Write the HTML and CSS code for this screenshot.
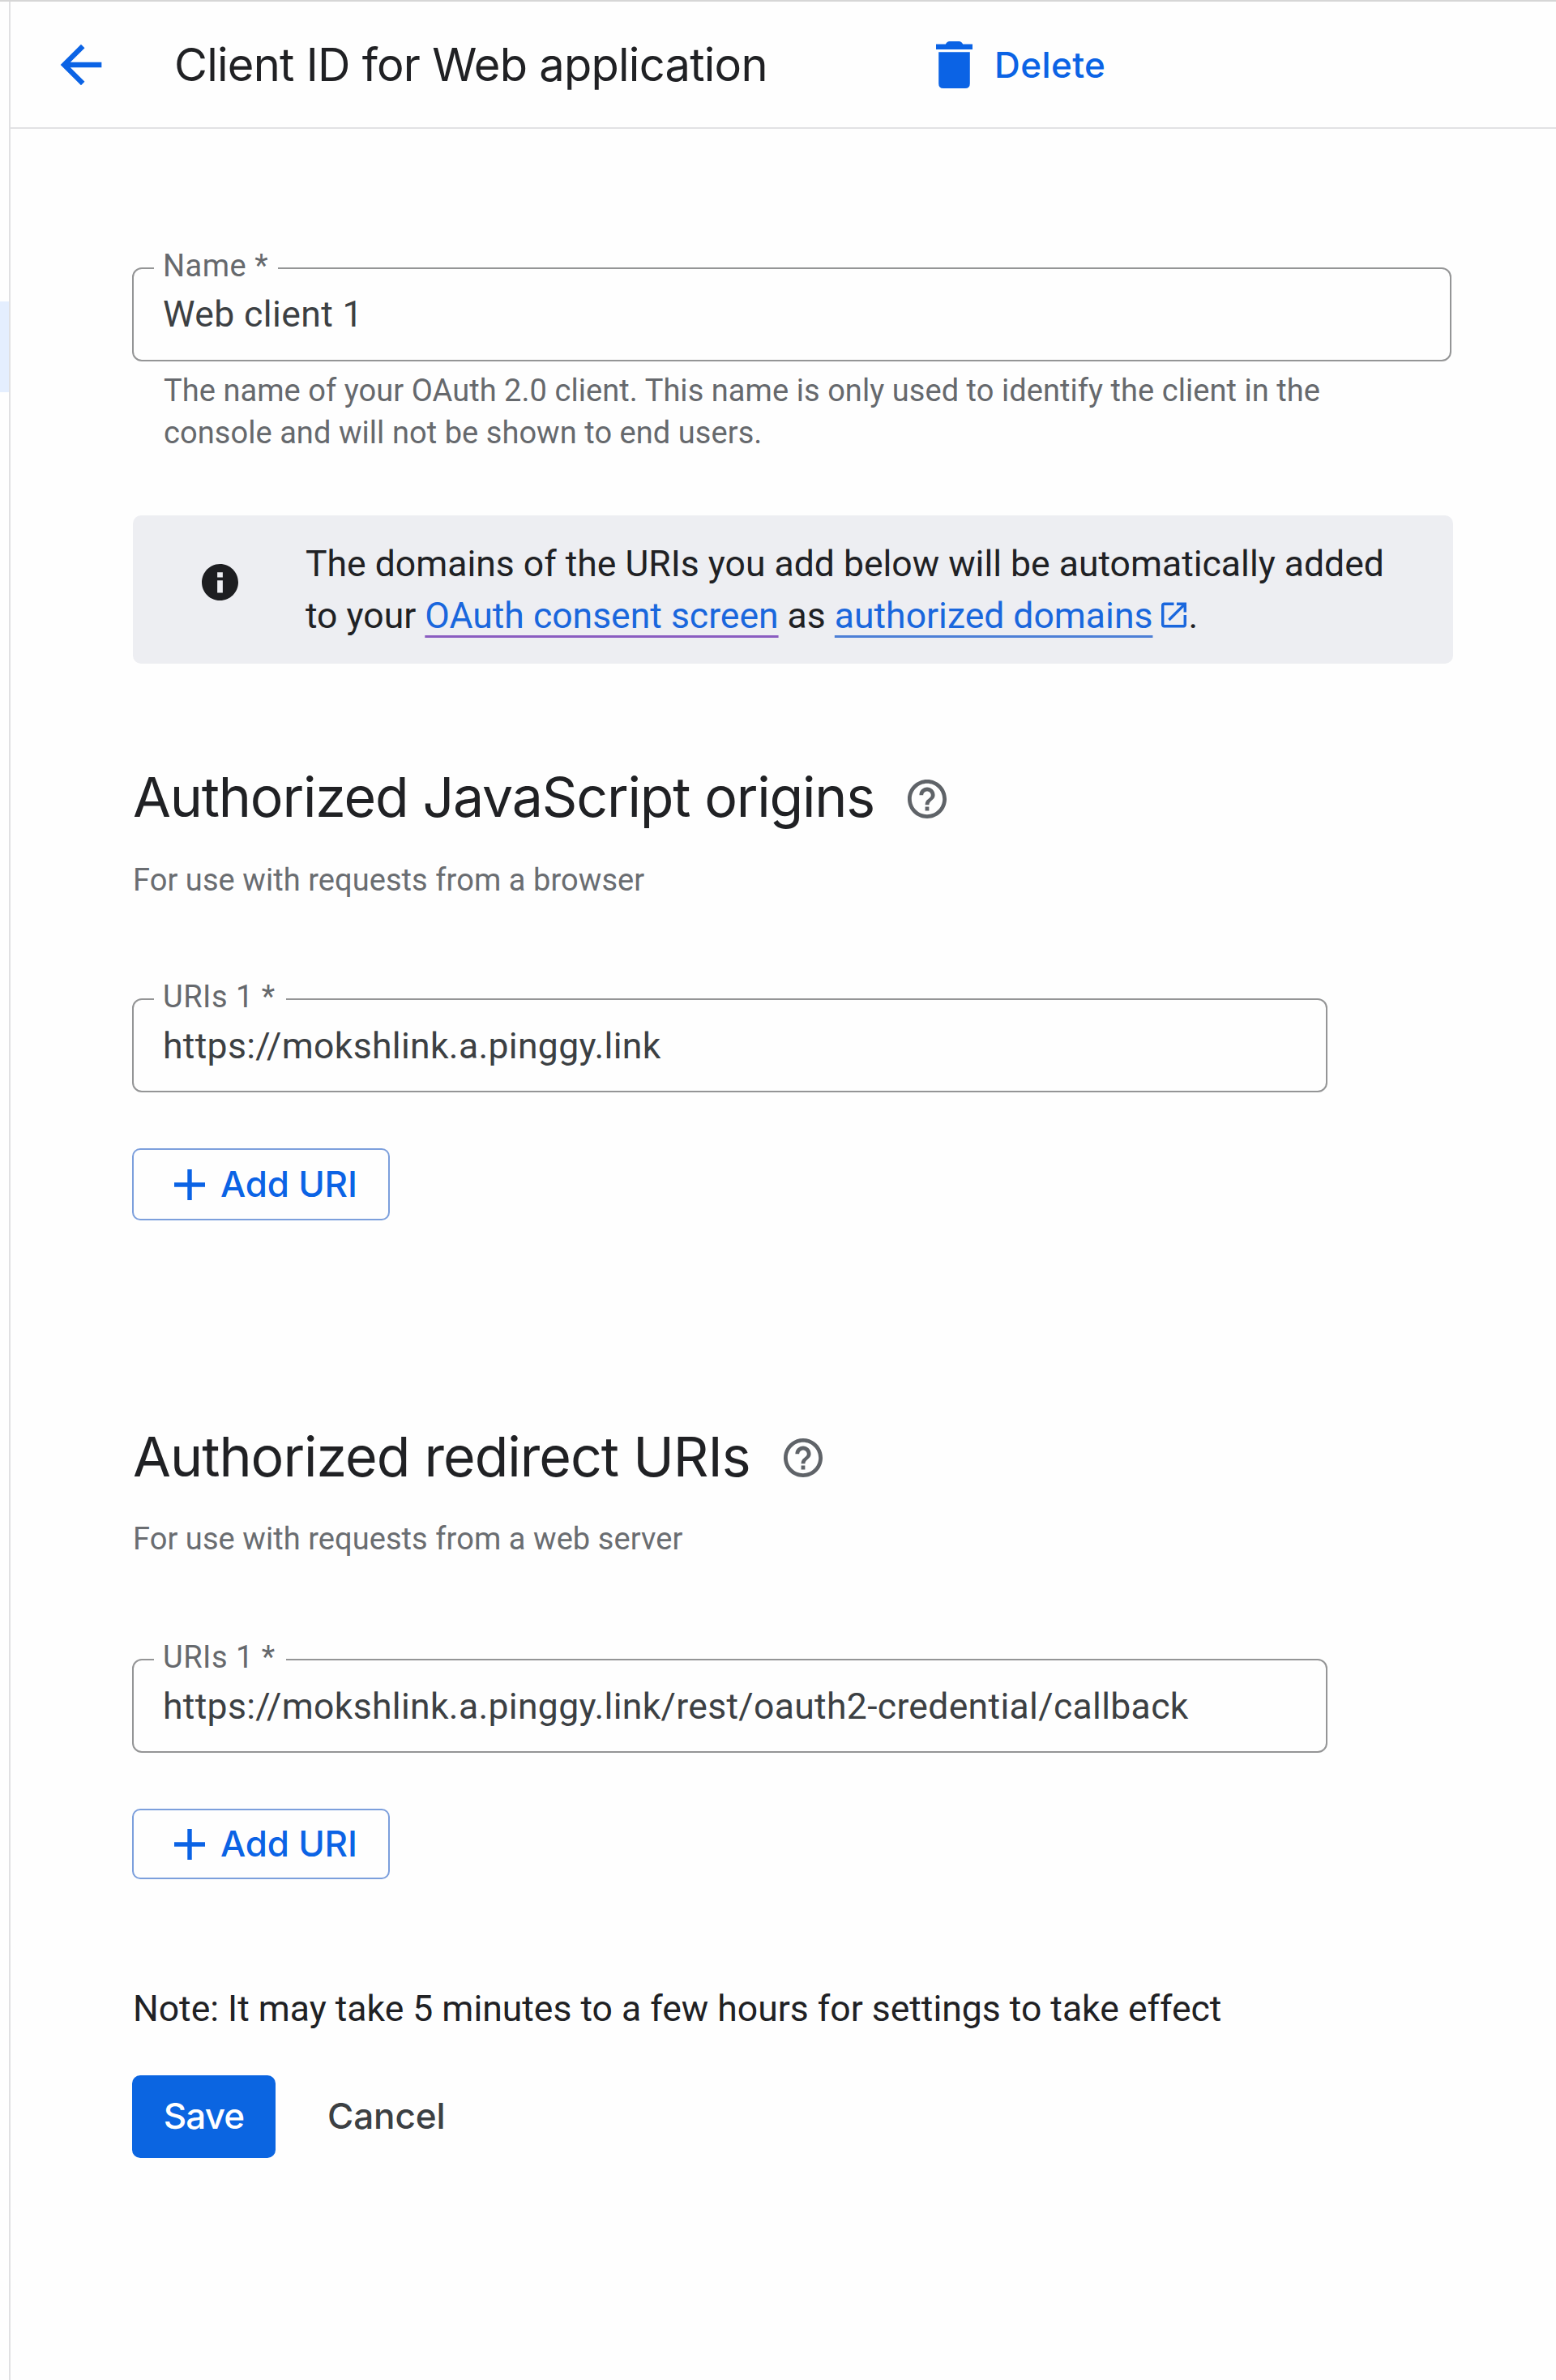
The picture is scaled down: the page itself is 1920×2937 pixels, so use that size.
FILE: index.html
```html
<!DOCTYPE html>
<html lang="en">
<head>
<meta charset="utf-8">
<title>Client ID for Web application</title>
<link rel="stylesheet" href="styles.css">
</head>
<body>
<div class="shell">
  <aside class="rail"><div class="rail-active"></div></aside>
  <div class="page">
    <header class="topbar">
      <svg class="back" viewBox="0 0 24 24" fill="currentColor"><path d="M20 11H7.830l5.590-5.590L12 4l-8 8 8 8 1.410-1.410L7.830 13H20v-2z"/></svg>
      <h1 class="title">Client ID for Web application</h1>
      <a class="delete">
        <svg class="trash" viewBox="5 3 14 18" fill="currentColor"><path d="M6 7.100h12V19.200q0 1.800-1.800 1.800H7.800Q6 21 6 19.200zM5 4.100h3.700Q9.200 3 10.200 3h3.600q1 0 1.500 1.100H19v2H5z"/></svg>
        <span>Delete</span>
      </a>
    </header>
    <main class="content">
      <fieldset class="field field-wide">
        <legend class="label label-name">Name *</legend>
        <div class="value">Web client 1</div>
      </fieldset>
      <p class="hint">The name of your OAuth 2.0 client. This name is only used to identify the client in the<br>console and will not be shown to end users.</p>

      <div class="notice">
        <svg class="info" viewBox="2 2 20 20" fill="currentColor"><path d="M12 2C6.480 2 2 6.480 2 12s4.480 10 10 10 10-4.480 10-10S17.520 2 12 2zm1.500 15.800h-3V11h3v6.800zm0-8.500h-3V6.500h3v2.800z"/></svg>
        <p class="notice-text">The domains of the URIs you add below will be automatically added<br>to your <a class="link visited">OAuth consent screen</a> as <a class="link">authorized domains</a><svg class="external" viewBox="3 3 18 18" fill="currentColor"><path d="M19 19H5V5h7V3H5c-1.110 0-2 .9-2 2v14c0 1.100.89 2 2 2h14c1.100 0 2-.9 2-2v-7h-2v7zM14 3v2h3.590l-9.830 9.830 1.410 1.410L19 6.410V10h2V3h-7z"/></svg>.</p>
      </div>

      <section class="group origins">
        <div class="heading">
          <h2>Authorized JavaScript origins</h2>
          <svg class="help" viewBox="2 2 20 20" fill="currentColor"><path d="M11 18h2v-2h-2v2zm1-16C6.480 2 2 6.480 2 12s4.480 10 10 10 10-4.480 10-10S17.520 2 12 2zm0 18c-4.410 0-8-3.590-8-8s3.590-8 8-8 8 3.590 8 8-3.590 8-8 8zm0-14c-2.210 0-4 1.790-4 4h2c0-1.100.9-2 2-2s2 .9 2 2c0 2-3 1.750-3 5h2c0-2.250 3-2.500 3-5 0-2.210-1.790-4-4-4z"/></svg>
        </div>
        <p class="sub">For use with requests from a browser</p>
        <fieldset class="field">
          <legend class="label label-uri">URIs 1 *</legend>
          <div class="value url">https://mokshlink.a.pinggy.link</div>
        </fieldset>
        <button class="add">
          <svg class="plus" viewBox="5 5 14 14" fill="currentColor"><path d="M19 13h-6v6h-2v-6H5v-2h6V5h2v6h6v2z"/></svg>
          <span>Add URI</span>
        </button>
      </section>

      <section class="group redirects">
        <div class="heading">
          <h2>Authorized redirect URIs</h2>
          <svg class="help" viewBox="2 2 20 20" fill="currentColor"><path d="M11 18h2v-2h-2v2zm1-16C6.480 2 2 6.480 2 12s4.480 10 10 10 10-4.480 10-10S17.520 2 12 2zm0 18c-4.410 0-8-3.590-8-8s3.590-8 8-8 8 3.590 8 8-3.590 8-8 8zm0-14c-2.210 0-4 1.790-4 4h2c0-1.100.9-2 2-2s2 .9 2 2c0 2-3 1.750-3 5h2c0-2.250 3-2.500 3-5 0-2.210-1.790-4-4-4z"/></svg>
        </div>
        <p class="sub">For use with requests from a web server</p>
        <fieldset class="field">
          <legend class="label label-uri">URIs 1 *</legend>
          <div class="value url">https://mokshlink.a.pinggy.link/rest/oauth2-credential/callback</div>
        </fieldset>
        <button class="add">
          <svg class="plus" viewBox="5 5 14 14" fill="currentColor"><path d="M19 13h-6v6h-2v-6H5v-2h6V5h2v6h6v2z"/></svg>
          <span>Add URI</span>
        </button>
      </section>

      <p class="note">Note: It may take 5 minutes to a few hours for settings to take effect</p>
      <div class="actions">
        <button class="save">Save</button>
        <button class="cancel">Cancel</button>
      </div>
    </main>
  </div>
</div>
</body>
</html>
```
FILE: styles.css
```css
* { box-sizing: border-box; }

body {
  margin: 0;
  background: #fefefe;
  color: #202124;
  font-family: Roboto, "Liberation Sans", sans-serif;
}

h1, h2, p { margin: 0; font-weight: 400; }
svg { display: block; flex: none; }
button { font: inherit; padding: 0; border: 0; background: none; }

.shell {
  display: flex;
  height: 2937px;
  border-top: 2px solid #d6d6d6;
}

.rail {
  width: 11px;
  padding-top: 370px;
}
.rail-active { height: 112px; background: #e4eefe; }

.page {
  flex: 1;
  border-left: 2px solid #e0e0e2;
}

/* Top bar */
.topbar {
  display: flex;
  align-items: center;
  height: 157px;
  padding-left: 49px;
  border-bottom: 2px solid #e2e2e4;
}
.back { width: 76px; height: 76px; color: #0b63e5; }
.title {
  width: 924px;
  margin-left: 77px;
  font: 400 56px/70px Inter, sans-serif;
  letter-spacing: -0.74px;
  white-space: nowrap;
}
.delete {
  display: flex;
  align-items: center;
  gap: 27px;
  margin-left: 16px;
  color: #0b63e5;
  font: 500 44px/56px Inter, sans-serif;
  letter-spacing: 0.4px;
}
.trash { width: 45px; height: 58px; }

/* Form */
.content { padding: 147px 0 0 150px; }

.field {
  width: 1475px;
  height: 140px;
  margin: 0;
  padding: 4px 25px 0;
  border: 2px solid #949596;
  border-radius: 12px;
}
.field-wide { width: 1628px; }
.label {
  padding: 0 0 6px 11px;
  color: #66696d;
  font-size: 38px;
  line-height: 44px;
  letter-spacing: 0.5px;
  white-space: nowrap;
}
.label-name { width: 153px; }
.label-uri { width: 163px; }
.value {
  padding-left: 11px;
  color: #3c4043;
  font-size: 44.5px;
  line-height: 56px;
  letter-spacing: 0.4px;
}
.url { padding-top: 1px; letter-spacing: 0.32px; }

.hint {
  margin-top: 10px;
  padding-left: 39px;
  color: #66696d;
  font-size: 38px;
  line-height: 52px;
  letter-spacing: 0.06px;
}

.notice {
  display: flex;
  width: 1629px;
  height: 183px;
  margin: 76px 0 0 1px;
  padding: 28px 0 0 85px;
  border-radius: 10px;
  background: #edeef2;
}
.info { width: 45px; height: 45px; margin-top: 32px; color: #1d1e21; }
.notice-text {
  margin-left: 83px;
  font-size: 44.5px;
  line-height: 64px;
  white-space: nowrap;
}
.link {
  color: #1a67dd;
  text-decoration: underline #4d7fd6 3px;
  text-underline-offset: 9px;
  text-decoration-skip-ink: none;
}
.visited { text-decoration-color: #8a5cc0; }
.external {
  display: inline-block;
  width: 31px;
  height: 32px;
  margin: 0 2px 0 11px;
  vertical-align: baseline;
  color: #1a67dd;
}

/* URI groups */
.origins { padding-top: 124px; }
.redirects { padding-top: 251px; }
.heading {
  display: flex;
  align-items: center;
  gap: 41px;
  padding-left: 1px;
}
.heading h2 {
  font: 400 68px/80px Inter, sans-serif;
  letter-spacing: -1.18px;
  white-space: nowrap;
}
.redirects h2 { letter-spacing: -0.99px; }
.help { width: 48px; height: 48px; margin-top: 6px; color: #5f6368; }
.redirects .help { margin-top: 4px; }
.sub {
  margin-top: 38px;
  padding-left: 1px;
  color: #6a6d71;
  font-size: 38px;
  line-height: 50px;
  letter-spacing: 0.07px;
}
.redirects .sub { margin-top: 37px; }
.group .field { margin-top: 97px; }
.redirects .field { margin-top: 99px; }

.add {
  display: flex;
  align-items: center;
  gap: 19px;
  width: 318px;
  height: 89px;
  margin-top: 69px;
  padding-left: 50px;
  border: 2px solid #7c9fdc;
  border-radius: 10px;
  color: #0b63e5;
  font: 500 44px/56px Inter, sans-serif;
  letter-spacing: -0.19px;
}
.add span { margin-top: -2px; }
.redirects .add { height: 87px; }
.redirects .add span { margin-top: -1px; }
.plus { width: 38px; height: 38px; }

.note {
  margin-top: 134px;
  padding-left: 1px;
  font-size: 44.5px;
  line-height: 52px;
}
.actions {
  display: flex;
  margin-top: 56px;
  font: 500 44px/56px Inter, sans-serif;
}
.save {
  width: 177px;
  height: 102px;
  padding-bottom: 2px;
  border-radius: 10px;
  background: #0b65e1;
  color: #fff;
  letter-spacing: -0.88px;
}
.cancel {
  margin-left: 64px;
  padding-bottom: 2px;
  color: #3c4043;
  letter-spacing: -0.1px;
}
```
